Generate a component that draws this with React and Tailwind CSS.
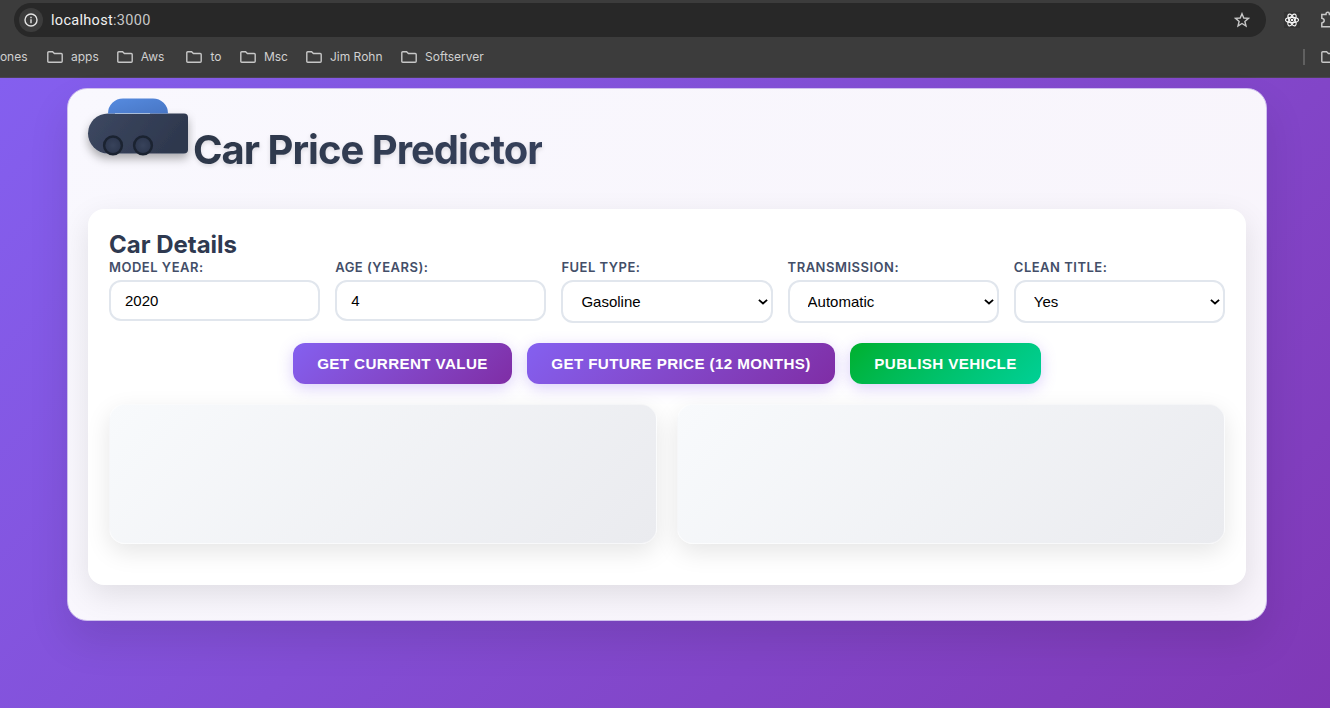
import React from 'react';

const Folder = () => (
  <svg className="h-3 w-4 shrink-0" viewBox="0 0 16 12" fill="none" stroke="#c7c7c7" strokeWidth="1.4">
    <path d="M.8 1.7Q.8.7 1.8.7H5.6L7.4 2.5H14.2Q15.2 2.5 15.2 3.5V10.3Q15.2 11.3 14.2 11.3H1.8Q.8 11.3.8 10.3Z" />
  </svg>
);

const Bookmark = ({ name, space }) => (
  <div className={`flex shrink-0 items-center gap-2 ${space}`}>
    <Folder />
    <span>{name}</span>
  </div>
);

function BrowserBar() {
  return (
    <header className="h-[78px] overflow-hidden border-b border-[#4b4354] bg-[#3c3c3c] font-['Inter',sans-serif]">
      <div className="flex h-10 items-center pl-[14px]">
        <div className="flex h-[34px] w-[1252px] shrink-0 items-center rounded-full bg-[#282828] pl-[5px] pr-4">
          <div className="flex size-6 items-center justify-center rounded-full bg-[#3c3c3c]">
            <svg className="size-[14px]" viewBox="0 0 14 14" fill="none" stroke="#e3e3e3">
              <circle cx="7" cy="7" r="6" strokeWidth="1.4" />
              <path d="M7 6.3V10.2M7 3.8V5.2" strokeWidth="1.4" />
            </svg>
          </div>
          <div className="ml-2 flex-1 pt-[2px] font-['Roboto',sans-serif] text-[14.5px] leading-5 tracking-[0.3px] text-[#f0f0f0]">
            localhost<span className="text-[#c7c7c7]">:3000</span>
          </div>
          <svg className="size-4" viewBox="0 0 16 16" fill="none" stroke="#c7c7c7" strokeWidth="1.4">
            <path d="M8 1.7L9.8 6 14.4 6.4 10.9 9.4 12 14 8 11.5 4 14 5.1 9.4 1.6 6.4 6.2 6Z" />
          </svg>
        </div>
        <div className="ml-[18px] flex size-4 shrink-0 items-center justify-center bg-[#333333]">
          <svg className="size-[14px]" viewBox="0 0 14 14" fill="none" stroke="#f5f5f5" strokeWidth="1.15">
            <ellipse cx="7" cy="7" rx="6.5" ry="2.6" />
            <ellipse cx="7" cy="7" rx="6.5" ry="2.6" transform="rotate(60 7 7)" />
            <ellipse cx="7" cy="7" rx="6.5" ry="2.6" transform="rotate(120 7 7)" />
            <circle cx="7" cy="7" r="1.2" fill="#f5f5f5" stroke="none" />
          </svg>
        </div>
        <svg className="ml-[20px] h-[18px] w-[18px] shrink-0" viewBox="0 0 18 18" fill="none" stroke="#c7c7c7" strokeWidth="1.5">
          <path d="M1.8 3.5H6V3Q6 1.3 7.7 1.3 9.4 1.3 9.4 3V3.5H14V15.7H1.8V12Q4.2 11.5 4.2 9.6 4.2 7.7 1.8 7.2Z" />
        </svg>
      </div>
      <div className="flex h-[34px] items-center text-[12px] text-[#d0d0d0]">
        <span className="-ml-[3px] w-[32px] shrink-0">jones</span>
        <Bookmark name="apps" space="ml-[18px]" />
        <Bookmark name="Aws" space="ml-[18px]" />
        <Bookmark name="to" space="ml-[22px]" />
        <Bookmark name="Msc" space="ml-[18.5px]" />
        <Bookmark name="Jim Rohn" space="ml-[18px]" />
        <Bookmark name="Softserver" space="ml-[18.5px]" />
        <div className="ml-auto mr-4 h-4 w-[2px] bg-[#606060]" />
        <div className="w-[9px] overflow-hidden"><Folder /></div>
      </div>
    </header>
  );
}

const Car = () => (
  <svg className="h-20 w-[116px] -ml-2 shrink-0" viewBox="-8 0 116 80">
    <defs>
      <linearGradient id="body" x1="0" y1="0" x2="1" y2=".3">
        <stop stopColor="#3d4861" />
        <stop offset="1" stopColor="#2e384e" />
      </linearGradient>
      <linearGradient id="roof" x1="0" y1="0" x2="1" y2="1">
        <stop stopColor="#568be0" />
        <stop offset="1" stopColor="#4876c4" />
      </linearGradient>
      <radialGradient id="wheel">
        <stop stopColor="#38435b" />
        <stop offset="1" stopColor="#2c364d" />
      </radialGradient>
      <filter id="shadow" x="-20%" y="-20%" width="140%" height="180%">
        <feDropShadow dx="0" dy="5" stdDeviation="5" floodColor="#000" floodOpacity=".32" />
      </filter>
    </defs>
    <path d="M20 15.4H96Q100 15.4 100 19.4V51.4Q100 55.4 96 55.4H20A20 20 0 0 1 20 15.4Z" fill="url(#body)" filter="url(#shadow)" />
    <path d="M20 15.4A15 15 0 0 1 35 .4H65A15 15 0 0 1 80 15.4Z" fill="url(#roof)" />
    <path d="M27 15.5H62" stroke="#a9bdd9" strokeWidth="1" />
    <circle cx="25" cy="47.4" r="8.9" fill="url(#wheel)" stroke="#1b2331" strokeWidth="2.4" />
    <circle cx="55" cy="47.4" r="8.9" fill="url(#wheel)" stroke="#1b2331" strokeWidth="2.4" />
  </svg>
);

const Field = ({ label, children }) => (
  <label className="flex flex-col">
    <span className="mb-1 h-[18px] whitespace-nowrap text-[13px] leading-[18px] font-semibold tracking-[0.5px] text-[#434e68]">
      {label}
    </span>
    {children}
  </label>
);

const TextInput = ({ value }) => (
  <input
    defaultValue={value}
    className="h-[41px] w-full rounded-xl border-2 border-[#e1e6ed] bg-white px-[14px] font-['Liberation_Sans',sans-serif] text-[15px] text-black outline-none"
  />
);

const SelectInput = ({ value }) => (
  <div className="grid items-center">
    <select className="col-start-1 row-start-1 h-[43px] w-full appearance-none rounded-xl border-2 border-[#e1e6ed] bg-white px-[18px] pt-[2px] font-['Liberation_Sans',sans-serif] text-[15px] text-black outline-none">
      <option>{value}</option>
    </select>
    <svg className="pointer-events-none col-start-1 row-start-1 mr-[5px] h-[6px] w-[10px] justify-self-end" viewBox="0 0 10 6" fill="none" stroke="#000" strokeWidth="1.8">
      <path d="M.9.8L5 4.5 9.1.8" />
    </svg>
  </div>
);

const ActionButton = ({ children, look }) => (
  <button
    className={`h-[41px] shrink-0 whitespace-nowrap rounded-xl pt-px font-['Liberation_Sans',sans-serif] text-[15.2px] font-bold tracking-[0.38px] text-white shadow-[0_4px_15px_rgba(131,96,240,0.3)] ${look}`}
  >
    {children}
  </button>
);

const ResultPanel = () => (
  <div className="h-[140px] rounded-2xl border border-white/50 bg-linear-135 from-[#f8fafc] to-[#eaebef] shadow-[0_8px_25px_rgba(0,0,0,0.1)]" />
);

export default function App() {
  return (
    <div className="h-[708px] overflow-hidden bg-[#3c3c3c]">
      <BrowserBar />
      <main className="h-[630px] bg-linear-135 from-[#845fef] to-[#8038b6] pt-[10px] pl-[67px] font-['Inter',sans-serif]">
        <section className="h-[533px] w-[1200px] rounded-[20px] border border-[#cfc0ee] bg-linear-135 from-[#f9f8fe] to-[#f8f4fb] px-5 shadow-[0_20px_40px_rgba(0,0,0,0.1)]">
          <div className="flex h-[120px] items-start pt-[9px]">
            <Car />
            <h1 className="ml-[-3px] mt-[28px] whitespace-nowrap bg-linear-135 from-[#2d3748] to-[#36415c] bg-clip-text text-[40px] leading-[48px] font-bold tracking-[-1px] text-transparent drop-shadow-[0_2px_2px_rgba(0,0,0,0.12)]">
              Car Price Predictor
            </h1>
          </div>
          <div className="h-[376px] rounded-2xl bg-white px-[21px] pt-[21px] shadow-[0_10px_30px_rgba(0,0,0,0.1)]">
            <h2 className="h-7 text-[24px] leading-[29px] font-bold text-[#2f3950]">Car Details</h2>
            <div className="grid h-[65px] grid-cols-5 gap-[15px]">
              <Field label="MODEL YEAR:"><TextInput value="2020" /></Field>
              <Field label="AGE (YEARS):"><TextInput value="4" /></Field>
              <Field label="FUEL TYPE:"><SelectInput value="Gasoline" /></Field>
              <Field label="TRANSMISSION:"><SelectInput value="Automatic" /></Field>
              <Field label="CLEAN TITLE:"><SelectInput value="Yes" /></Field>
            </div>
            <div className="mt-5 flex justify-center gap-[15px]">
              <ActionButton look="w-[219px] bg-linear-135 from-[#8460f0] to-[#7f2da5]">GET CURRENT VALUE</ActionButton>
              <ActionButton look="w-[308px] bg-linear-135 from-[#8460f0] to-[#7f2da5]">GET FUTURE PRICE (12 MONTHS)</ActionButton>
              <ActionButton look="w-[191px] bg-linear-135 from-[#00b02c] to-[#00d096]">PUBLISH VEHICLE</ActionButton>
            </div>
            <div className="mt-5 grid grid-cols-2 gap-5">
              <ResultPanel />
              <ResultPanel />
            </div>
          </div>
        </section>
      </main>
    </div>
  );
}
